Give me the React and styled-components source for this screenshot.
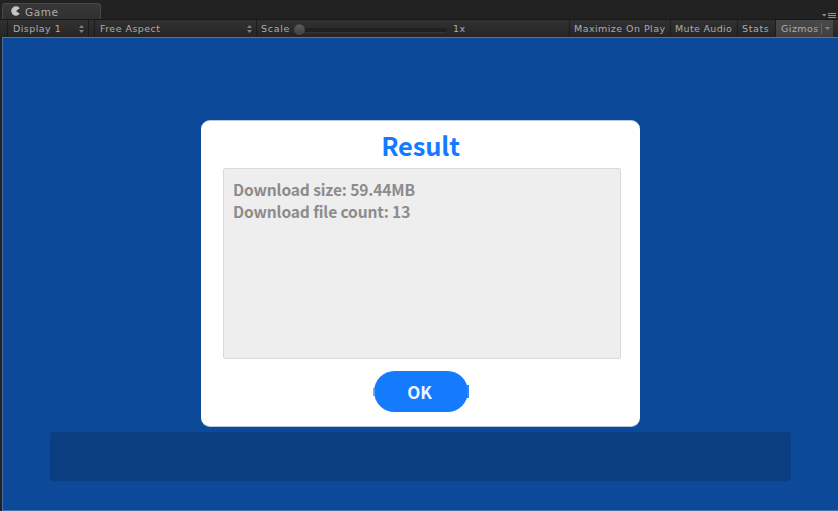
import React from "react";
import styled, { createGlobalStyle } from "styled-components";

const GlobalStyle = createGlobalStyle`
  * { box-sizing: border-box; }
  body { margin: 0; background: #222; overflow: hidden; }
`;

const Window = styled.div`
  width: 838px;
  height: 511px;
  display: flex;
  flex-direction: column;
  background: #222222;
  font-family: "DejaVu Sans", sans-serif;
  color: #acacac;
  overflow: hidden;
`;

const TabBar = styled.div`
  height: 19px;
  flex: none;
  display: flex;
  align-items: flex-end;
  justify-content: space-between;
  padding: 0 2px;
`;

const Tab = styled.div`
  width: 99px;
  height: 16px;
  display: flex;
  align-items: center;
  gap: 4px;
  padding: 0 0 0 8px;
  font-size: 10.5px;
  letter-spacing: 0.6px;
  line-height: 14px;
  background: linear-gradient(#383838, #303030);
  border: 1px solid #484848;
  border-bottom: 0;
  border-radius: 3px 3px 0 0;
`;

const TabIcon = styled.svg`
  display: block;
  margin-top: -1px;
`;

const PaneMenu = styled.svg`
  display: block;
  margin-bottom: -1px;
`;

const Toolbar = styled.div`
  height: 18px;
  flex: none;
  display: flex;
  padding: 0 5px 0 7px;
  background: linear-gradient(#313131, #252525);
  border-top: 1px solid #191919;
`;

const Cell = styled.div`
  width: ${(p) => p.$width}px;
  flex: none;
  display: flex;
  align-items: center;
  justify-content: space-between;
  padding: ${(p) => p.$pad || "0 4px 0 5px"};
  border-left: 1px solid #1c1c1c;
  background: ${(p) => (p.$active ? "linear-gradient(#494949, #404040)" : "none")};
`;

const Label = styled.span`
  font-size: 9.5px;
  line-height: 16px;
  letter-spacing: ${(p) => p.$track || 0.45}px;
  white-space: nowrap;
`;

const Spacer = styled.div`
  flex: 1;
`;

const ScaleControl = styled.div`
  display: flex;
  align-items: center;
  padding: 1px 0 0 4px;
  border-left: 1px solid #1c1c1c;
`;

const Slider = styled.div`
  width: 153px;
  height: 12px;
  margin: 1px 6px 0 4px;
  display: flex;
  align-items: center;
`;

const Knob = styled.div`
  width: 11px;
  height: 11px;
  border-radius: 50%;
  background: linear-gradient(#5c5c5c, #414141);
  border: 1px solid #4c4c4c;
`;

const Track = styled.div`
  flex: 1;
  height: 5px;
  margin-top: 2px;
  border-radius: 0 2px 2px 0;
  background: #202020;
  border-bottom: 1px solid #363636;
`;

const Split = styled.div`
  width: 1px;
  height: 11px;
  background: #646464;
`;

const Viewport = styled.div`
  flex: 1;
  margin-left: 2px;
  display: grid;
  grid-template-rows: 82px 307px 5px 49px;
  justify-content: center;
  justify-items: center;
  background: #0c4a99;
  border-top: 1px solid #4379b8;
  border-left: 1px solid #476fa4;
  box-shadow: inset 0 -2px 0 -1px #476fa4;
`;

const Dialog = styled.section`
  grid-row: 2;
  width: 439px;
  height: 307px;
  display: flex;
  flex-direction: column;
  align-items: center;
  background: #fff;
  border-top: 1px solid #b4c8e0;
  border-bottom: 1px solid #b4c8e0;
  border-radius: 9px;
  font-family: "Noto Sans CJK SC", sans-serif;
  font-weight: 700;
`;

const Title = styled.h1`
  margin: 0;
  height: 47px;
  padding-top: 5px;
  font-size: 25.5px;
  line-height: 38px;
  letter-spacing: -0.15px;
  font-weight: 700;
  color: #147bff;
`;

const Report = styled.div`
  width: 398px;
  height: 191px;
  margin-left: 3px;
  padding: 9px;
  font-size: 15.6px;
  letter-spacing: -0.15px;
  line-height: 22px;
  color: #8c8c8c;
  background: #eeeeee;
  border: 1px solid #dadada;
  border-radius: 2px;
`;

const Confirm = styled.button`
  position: relative;
  width: 94px;
  height: 41px;
  margin-top: 12px;
  padding: 0 2px 0 0;
  border: 0;
  border-radius: 21px;
  background: #147bff;
  color: #f0f6ff;
  font: inherit;
  font-size: 17px;
  line-height: 39px;
  letter-spacing: -0.2px;

  &::before,
  &::after {
    content: "";
    position: absolute;
    top: 17px;
    left: -1px;
    width: 2px;
    height: 8px;
    background: #62a6ff;
  }

  &::after {
    top: 14px;
    left: auto;
    right: -1px;
    height: 13px;
    background: #2b87ff;
  }
`;

const StatusPanel = styled.div`
  grid-row: 4;
  width: 741px;
  height: 49px;
  border-radius: 4px;
  background: #0b3e80;
`;

const Updown = () => (
  <svg width="5" height="8" viewBox="0 0 5 8" fill="#808080">
    <path d="M0 3 2.5 0 5 3zM0 5 2.5 8 5 5z" />
  </svg>
);

export default function App() {
  return (
    <Window>
      <GlobalStyle />
      <TabBar>
        <Tab>
          <TabIcon width="10" height="10" viewBox="0 0 10 10" fill="#c6c6c6">
            <path d="M8.800 2.300A4.700 4.700 0 1 0 8.800 7.700L5 5z" />
          </TabIcon>
          Game
        </Tab>
        <PaneMenu width="15" height="7" viewBox="0 0 15 7" fill="#929292">
          <path d="M1 1h4.500L3.200 3.500zM7 0h8v1H7zM7 2h8v1H7zM7 4h8v1H7z" />
        </PaneMenu>
      </TabBar>
      <Toolbar>
        <Cell $width={81}><Label>Display 1</Label><Updown /></Cell>
        <Cell $width={6} $pad="0" />
        <Cell $width={162} $pad="0 4px 0 5px"><Label>Free Aspect</Label><Updown /></Cell>
        <ScaleControl>
          <Label $track={0.7}>Scale</Label>
          <Slider><Knob /><Track /></Slider>
          <Label>1x</Label>
        </ScaleControl>
        <Spacer />
        <Cell $width={101} $pad="0 4px"><Label>Maximize On Play</Label></Cell>
        <Cell $width={67} $pad="0 4px"><Label $track={0.33}>Mute Audio</Label></Cell>
        <Cell $width={38} $pad="0 4px"><Label $track={0.6}>Stats</Label></Cell>
        <Cell $width={58} $pad="0 3px 0 5px" $active>
          <Label>Gizmos</Label>
          <Split />
          <svg width="5" height="3" viewBox="0 0 5 3" fill="#858585"><path d="M0 0h5L2.500 3z" /></svg>
        </Cell>
      </Toolbar>
      <Viewport>
        <Dialog>
          <Title>Result</Title>
          <Report>
            <div>Download size: 59.44MB</div>
            <div>Download file count: 13</div>
          </Report>
          <Confirm>OK</Confirm>
        </Dialog>
        <StatusPanel />
      </Viewport>
    </Window>
  );
}
